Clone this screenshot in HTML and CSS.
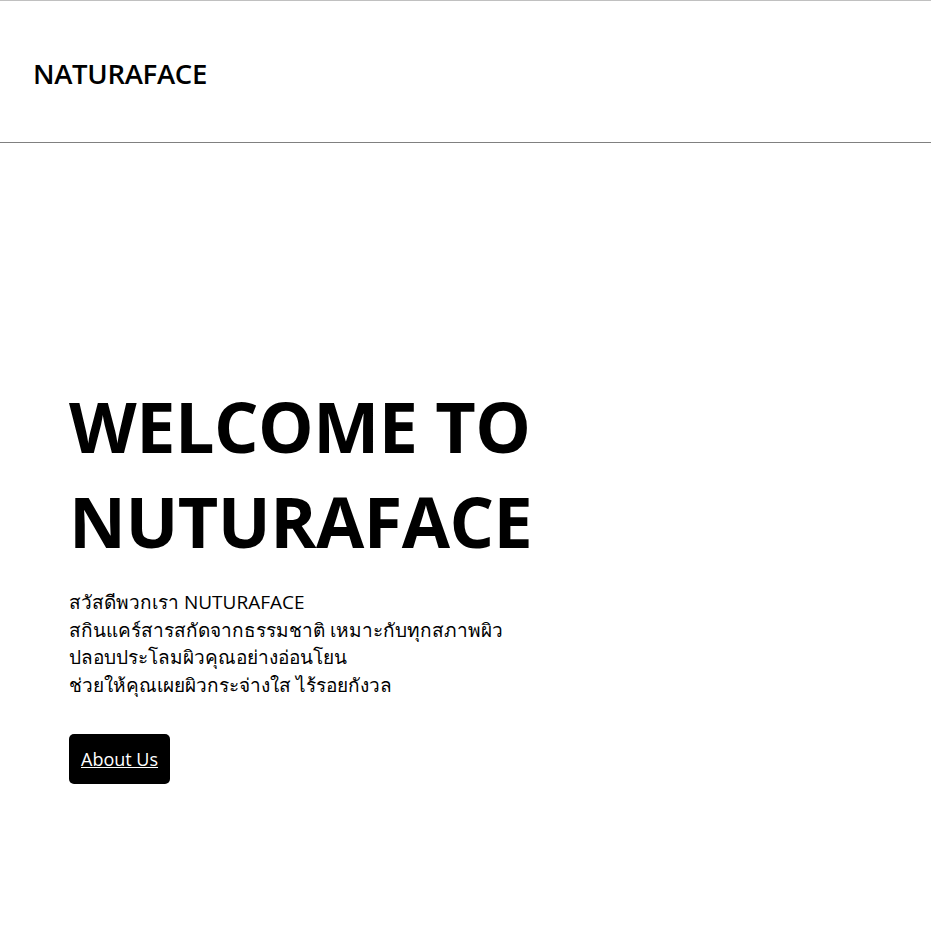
FILE: index.html
```html
<!DOCTYPE html>
<html lang="th">
<head>
<meta charset="utf-8">
<title>NATURAFACE</title>
<link rel="stylesheet" href="styles.css">
</head>
<body>
<header class="site-header">
  <div class="logo">NATURAFACE</div>
</header>
<main class="hero">
  <h1 class="hero-title">WELCOME TO<br>NUTURAFACE</h1>
  <p class="hero-text"><span class="light">สวัสดีพวกเรา NUTURAFACE</span><br>สกินแคร์สารสกัดจากธรรมชาติ เหมาะกับทุกสภาพผิว<br>ปลอบประโลมผิวคุณอย่างอ่อนโยน<br>ช่วยให้คุณเผยผิวกระจ่างใส ไร้รอยกังวล</p>
  <a class="btn" href="#">About Us</a>
</main>
</body>
</html>
```
FILE: styles.css
```css
html, body {
  margin: 0;
  padding: 0;
  background: #ffffff;
  color: #000000;
  font-family: "Open Sans", "Noto Sans", sans-serif;
}
.site-header {
  border-top: 1px solid #c0c0c0;
  border-bottom: 1px solid #808080;
  box-sizing: border-box;
  height: 143px;
  display: flex;
  align-items: center;
  padding: 3px 0 0 33px;
}
.logo {
  font-size: 27.5px;
  font-weight: 600;
  letter-spacing: -0.3px;
}
.hero {
  padding: 236px 0 0 69px;
}
.hero-title {
  margin: 0;
  font-size: 70px;
  font-weight: 700;
  line-height: 95px;
  letter-spacing: -0.5px;
}
.hero-text {
  margin: 20px 0 0;
  font-size: 19px;
  line-height: 27.5px;
  font-weight: 500;
}
.hero-text .light {
  font-weight: 400;
}
.btn {
  display: inline-block;
  margin-top: 35px;
  background: #000;
  color: #fff;
  font-size: 18px;
  padding: 12px;
  border-radius: 5px;
  line-height: 26px;
}
```
